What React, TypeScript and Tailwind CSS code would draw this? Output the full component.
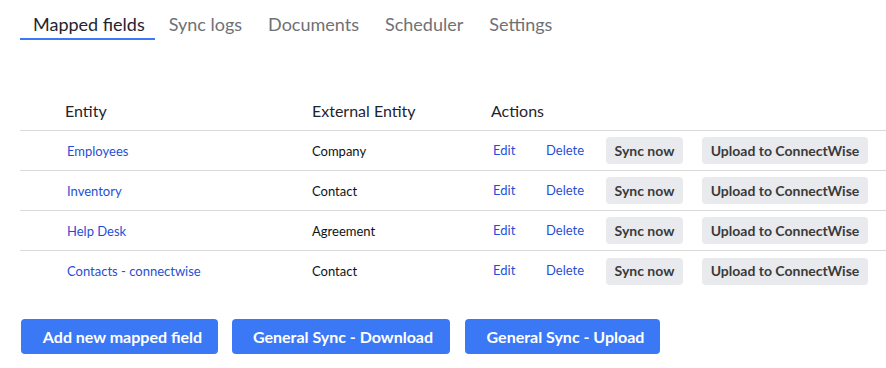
import React from "react";

const tabs = ["Mapped fields", "Sync logs", "Documents", "Scheduler", "Settings"];
const rows = [
  { entity: "Employees", ext: "Company" },
  { entity: "Inventory", ext: "Contact" },
  { entity: "Help Desk", ext: "Agreement" },
  { entity: "Contacts - connectwise", ext: "Contact" },
];

export default function App() {
  return (
    <div className="w-[886px] h-[368px] bg-white overflow-hidden" style={{ fontFamily: "Lato, 'Open Sans', sans-serif" }}>
      <div className="pl-5 pt-[13px]">
        <nav className="flex gap-[2px]">
          {tabs.map((t, i) => (
            <div
              key={t}
              className={
                i === 0
                  ? "pl-[13px] pr-[10px] pb-[3px] text-[18px] leading-[22px] text-[#1f2430] border-b-2 border-[#3b78f6]"
                  : "px-[12px] pb-[3px] text-[18px] leading-[22px] text-[#6f7175] border-b-2 border-transparent"
              }
            >
              {t}
            </div>
          ))}
        </nav>
      </div>

      <div className="ml-5 mt-[51px]">
        <div className="flex h-[40px] items-center border-b border-[#d9d9d9] text-[16px] leading-6 text-[#1f2430]">
          <div className="w-[292px] pl-[45px]">Entity</div>
          <div className="w-[179px]">External Entity</div>
          <div>Actions</div>
        </div>
        {rows.map((r, i) => (
          <div
            key={r.entity}
            className={
              "flex h-[40px] items-center text-[13px] leading-5 " +
              (i < rows.length - 1 ? "border-b border-[#d9d9d9]" : "")
            }
          >
            <div className="w-[292px] pl-[47px] text-[#1f4fd6]">{r.entity}</div>
            <div className="w-[179px] text-[#111111]">{r.ext}</div>
            <div className="flex items-center">
              <div className="w-[55px] pl-[2px] text-[#1f4fd6] -translate-y-[1px]">Edit</div>
              <div className="w-[60px] text-[#1f4fd6] -translate-y-[1px]">Delete</div>
              <button className="h-[27px] w-[77px] rounded-[4px] bg-[#e9eaee] text-[14px] font-bold text-[#3a3a3a]">
                Sync now
              </button>
              <button className="ml-[19px] h-[27px] w-[166px] rounded-[4px] bg-[#e9eaee] text-[14px] font-bold text-[#3a3a3a]">
                Upload to ConnectWise
              </button>
            </div>
          </div>
        ))}
      </div>

      <div className="ml-[21px] mt-[28px] flex">
        <button className="h-[35px] w-[197px] pl-[6px] rounded-[4px] bg-[#3b78f6] text-[16px] font-bold text-white">
          Add new mapped field
        </button>
        <button className="ml-[14px] h-[35px] w-[218px] pl-[4px] rounded-[4px] bg-[#3b78f6] text-[16px] font-bold text-white">
          General Sync - Download
        </button>
        <button className="ml-[15px] h-[35px] w-[195px] pl-[6px] rounded-[4px] bg-[#3b78f6] text-[16px] font-bold text-white">
          General Sync - Upload
        </button>
      </div>
    </div>
  );
}
